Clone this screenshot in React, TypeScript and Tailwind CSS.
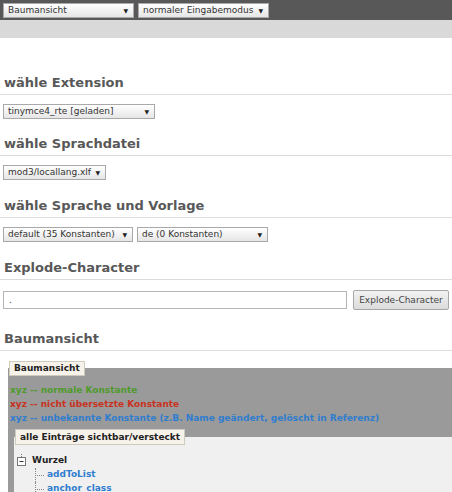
import React from "react";

// kleines Select im Stil des Screenshots
function FakeSelect({ label, width }: { label: string; width: string }) {
  return (
    <div
      className={`${width} h-[15px] flex items-center justify-between pl-[4px] pr-[5px] border border-[#a9a9a9] bg-gradient-to-b from-[#ffffff] to-[#e6e6e6] text-[9px] leading-[13px] text-[#333]`}
    >
      <span className="whitespace-nowrap">{label}</span>
      <span className="text-[6px] text-[#222]">▼</span>
    </div>
  );
}

function Heading({ title, className = "" }: { title: string; className?: string }) {
  return (
    <div
      className={`h-[22px] leading-[20px] border-b border-[#dcdcdc] pl-[4px] text-[13px] font-bold text-[#585858] ${className}`}
    >
      {title}
    </div>
  );
}

function TreeMinus() {
  return (
    <svg width="9" height="14" viewBox="0 0 9 14" className="shrink-0">
      <line x1="4.5" y1="0" x2="4.5" y2="3" stroke="#777" strokeDasharray="1 1" />
      <rect x="0.5" y="3.5" width="8" height="8" fill="#fff" stroke="#777" />
      <line x1="2.5" y1="7.5" x2="6.5" y2="7.5" stroke="#333" />
    </svg>
  );
}

const tree = ["addToList", "anchor_class"];

export default function App() {
  return (
    <div className="w-[452px] h-[492px] overflow-hidden bg-white font-['DejaVu_Sans',Verdana,sans-serif]">
      {/* obere Leiste */}
      <div className="h-[20px] bg-[#585858] flex items-center gap-[4px] px-[3px]">
        <FakeSelect label="Baumansicht" width="w-[131px]" />
        <FakeSelect label="normaler Eingabemodus" width="w-[131px]" />
      </div>
      <div className="h-[18px] bg-[#d9d9d9]" />

      <div className="pt-[35px]">
        <Heading title="wähle Extension" />
        <div className="pl-[3px] mt-[9px]">
          <FakeSelect label="tinymce4_rte [geladen]" width="w-[152px]" />
        </div>

        <Heading title="wähle Sprachdatei" className="mt-[15px]" />
        <div className="pl-[3px] mt-[9px]">
          <FakeSelect label="mod3/locallang.xlf" width="w-[103px]" />
        </div>

        <Heading title="wähle Sprache und Vorlage" className="mt-[16px]" />
        <div className="pl-[3px] mt-[9px] flex gap-[4px]">
          <FakeSelect label="default (35 Konstanten)" width="w-[130px]" />
          <FakeSelect label="de (0 Konstanten)" width="w-[131px]" />
        </div>

        <Heading title="Explode-Character" className="mt-[16px]" />
        <div className="pl-[3px] mt-[10px] flex items-center gap-[6px]">
          <div className="w-[344px] h-[18px] border border-[#b5b5b5] bg-white pl-[5px] text-[9px] leading-[16px] text-[#333]">
            .
          </div>
          <div className="w-[96px] h-[20px] border border-[#a6a6a6] rounded-[2px] bg-gradient-to-b from-[#f2f2f2] to-[#dcdcdc] text-[9px] leading-[18px] text-[#444] text-center">
            Explode-Character
          </div>
        </div>

        <Heading title="Baumansicht" className="mt-[19px]" />

        {/* Fieldset Baumansicht */}
        <div className="ml-[8px] mt-[10px] relative">
          <div className="ml-[1px] relative z-10 w-fit h-[15px] px-[4px] bg-[#f7f3ea] border border-[#cfcabe] text-[9px] font-bold leading-[13px] text-[#222]">
            Baumansicht
          </div>
          <div className="-mt-[8px] bg-[#9a9a9a] pt-[15px] pl-[2px]">
            <div className="text-[9px] font-bold leading-[14px]">
              <div className="text-[#4f9a2c]">xyz -- normale Konstante</div>
              <div className="text-[#c9321f]">xyz -- nicht übersetzte Konstante</div>
              <div className="text-[#2f7dcf]">
                xyz -- unbekannte Konstante (z.B. Name geändert, gelöscht in Referenz)
              </div>
            </div>

            {/* inneres Fieldset */}
            <div className="ml-[4px] mt-[4px] relative">
              <div className="ml-[1px] relative z-10 w-fit h-[16px] px-[4px] bg-[#f7f3ea] border border-[#cfcabe] text-[9px] font-bold leading-[14px] text-[#222]">
                alle Einträge sichtbar/versteckt
              </div>
              <div className="-mt-[8px] bg-[#f0f0f0] pt-[17px] pl-[3px] pb-[20px]">
                <div className="flex items-center gap-[6px] h-[14px]">
                  <TreeMinus />
                  <span className="text-[9px] font-bold text-[#222]">Wurzel</span>
                </div>
                <div className="ml-[18px]">
                  {tree.map((item) => (
                    <div key={item} className="flex items-center h-[14px]">
                      <div className="relative w-[12px] h-[14px] shrink-0">
                        <div className="absolute left-0 top-0 h-[14px] border-l border-dotted border-[#888]" />
                        <div className="absolute left-0 top-[7px] w-[9px] border-t border-dotted border-[#888]" />
                      </div>
                      <span className="text-[9px] font-bold text-[#2f7dcf]">{item}</span>
                    </div>
                  ))}
                </div>
              </div>
            </div>
          </div>
        </div>
      </div>
    </div>
  );
}
